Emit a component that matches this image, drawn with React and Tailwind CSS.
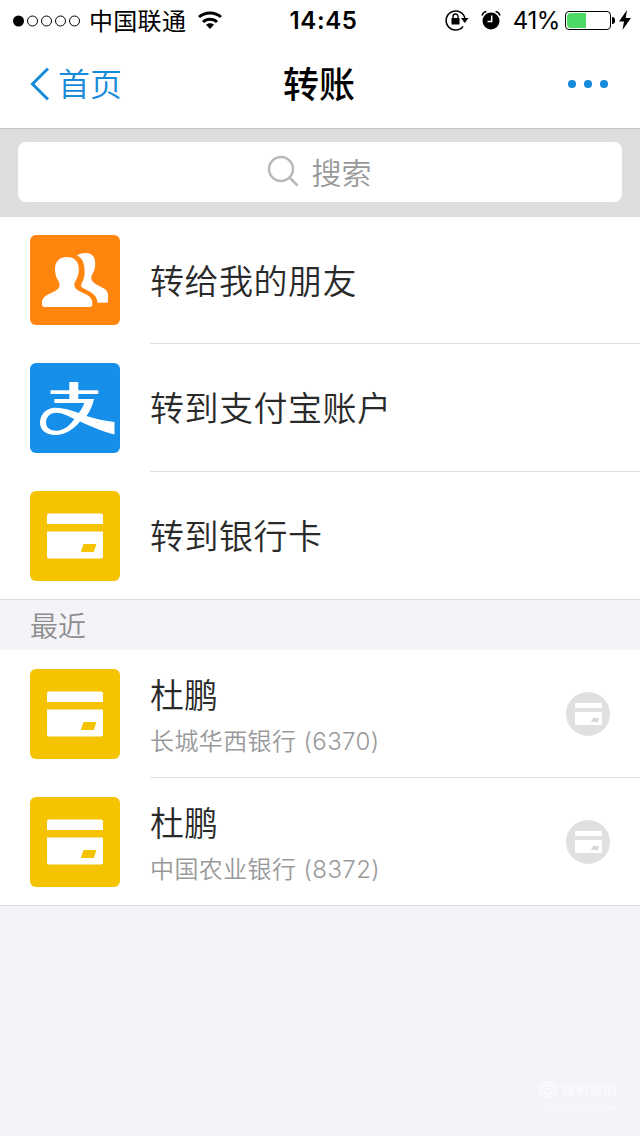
const actions = [
  { id: "friend", label: "转给我的朋友", Icon: FriendsIcon },
  { id: "alipay", label: "转到支付宝账户", Icon: AlipayIcon },
  { id: "card", label: "转到银行卡", Icon: CardIcon },
];

const recents = [
  { id: "6370", name: "杜鹏", bank: "长城华西银行 (6370)" },
  { id: "8372", name: "杜鹏", bank: "中国农业银行 (8372)" },
];

function FriendsIcon() {
  return (
    <svg viewBox="0 0 90 90" className="h-[90px] w-[90px] shrink-0 rounded-md bg-[#ff850f]" fill="#fff">
      <path d="M47 20.500C49.500 18.700 52.500 18 56 18c6 0 9.200 4 9.200 10.500 0 5-1 7.500-2.500 10-1.500 2.500-2 5-.7 7 1.200 2 4 4 7.200 5.600 5.500 2.700 8.800 4.500 8.800 9.200V66c0 1.200-.8 1.800-1.800 1.800H67.500C67 61.500 64 59 59 56.200c-5-2.700-8-3.900-8-5.700 0-2 3.200-5 3.600-12C55 30 53 23 47 20.500z" />
      <path d="M37 22c7.500 0 11.800 4.600 11.800 12 0 5-1 8.500-3.300 12-1.500 2.300-1.500 5.500 0 7.200 2 2.300 5 3.600 8.700 5.200 5 2.200 8.100 4.700 8.100 9.200v2.200c0 1.300-1 2.200-2.300 2.200H14.300c-1.300 0-2.300-.9-2.300-2.200v-2.200c0-4.500 3.100-7 8.100-9.200 3.700-1.600 6.700-2.900 8.400-5.200 1.400-1.800 1.400-4.900-.1-7.200C26.100 42.500 25 39 25 34c0-7.400 4.500-12 12-12z" />
    </svg>
  );
}

function AlipayIcon() {
  return (
    <svg viewBox="0 0 90 90" className="h-[90px] w-[90px] shrink-0 rounded-md bg-[#168feb]" fill="#fff">
      <path d="M39.300 19h9v8.300h20V31h-20v5h15.500v.8c-1.300 6-3.800 11.200-7.300 16.200C65.500 56 75 58 84.500 59v12.500C72.500 68.500 61 63.500 50 58.500 43.500 66.500 35 72 25.500 72 15.700 72 10 67 10 59.500c0-8.300 6.500-14.800 15.500-14.800 7.500 0 15.500 2.500 23.200 5.300 2.700-3.200 4.600-6.500 5.600-10h-30v-4h15v-5H20.500v-3.700h18.800zM44.300 56c-6-3-12-6.300-18-6.300-6 0-10.300 4-10.300 9.800 0 5.200 4.200 8.200 10.500 8.200 7 0 13-4.700 17.800-11.700z" fillRule="evenodd" />
    </svg>
  );
}

function CardIcon() {
  return (
    <svg viewBox="0 0 90 90" className="h-[90px] w-[90px] shrink-0 rounded-md bg-[#f5c300]">
      <path d="M19 22.500h52a2 2 0 0 1 2 2V33H17v-8.500a2 2 0 0 1 2-2z" fill="#fff" />
      <path d="M17 40.500h56v25a2 2 0 0 1-2 2H19a2 2 0 0 1-2-2z" fill="#fff" />
      <path d="M53.500 53h13l-2.700 8H50.800z" fill="#f5c300" />
    </svg>
  );
}

function CardBadge() {
  return (
    <svg viewBox="0 0 44 44" className="h-11 w-11 shrink-0">
      <circle cx="22" cy="22" r="22" fill="#e0e0e0" />
      <path d="M10 11h25a1 1 0 0 1 1 1v4H9v-4a1 1 0 0 1 1-1zM9 20h27v12a1 1 0 0 1-1 1H10a1 1 0 0 1-1-1z" fill="#fff" />
      <path d="M27 26h6l-1 4h-7z" fill="#d8d8d8" />
    </svg>
  );
}

function StatusBar() {
  return (
    <div className="grid h-10 grid-cols-[1fr_auto_1fr] items-center pt-px text-2xl leading-none text-black">
      <div className="flex items-center pl-3">
        <svg viewBox="0 0 70 14" className="h-3.5 w-[70px]">
          <circle cx="6.500" cy="7" r="5.500" />
          {[20.5, 34.5, 48.5, 62.5].map((x) => (
            <circle key={x} cx={x} cy="7" r="5" fill="none" stroke="#000" strokeWidth="1" />
          ))}
        </svg>
        <span className="ml-[7px] pt-0.5 tracking-[0.3px]">中国联通</span>
        <svg viewBox="0 0 24 18" className="mb-px ml-3 h-[18px] w-6" fill="none" stroke="#000" strokeWidth="3">
          <path d="M1 6c6.200-5.500 15.800-5.500 22 0M5 11c4-3.700 10-3.700 14 0" />
          <path d="M12 18l-4-4.200c2.400-2 5.600-2 8 0z" fill="#000" stroke="none" />
        </svg>
      </div>
      <div className="pt-px pl-[7px] font-semibold tracking-[0.6px]">14:45</div>
      <div className="flex items-center justify-end pr-[9px]">
        <svg viewBox="0 0 24 22" className="mb-0.5 h-[22px] w-6">
          <path d="M18 17.500A9.500 9.500 0 1 1 20 10" fill="none" stroke="#000" strokeWidth="1.500" />
          <path d="M16 9h7.500l-3.700 5z" />
          <rect x="6.500" y="9" width="8" height="6.500" rx=".5" />
          <path d="M8 9.500V7.500a2.500 2.500 0 0 1 5 0v2" fill="none" stroke="#000" strokeWidth="1.400" />
        </svg>
        <svg viewBox="0 0 20 20" className="mb-0.5 ml-3 h-5 w-5">
          <circle cx="10" cy="11" r="8.500" />
          <path d="M1 5.500Q2 2 5.500 1.500M19 5.500Q18 2 14.500 1.500" fill="none" stroke="#000" strokeWidth="1.500" />
          <path d="M10.700 5.500v6H6.500" fill="none" stroke="#fff" strokeWidth="1.500" />
        </svg>
        <span className="ml-3 pt-px tracking-[-0.4px]">41%</span>
        <div className="ml-[5px] flex h-[19px] w-[46px] rounded border border-black p-px">
          <div className="w-[19px] rounded-l-sm bg-[#4cd964]" />
        </div>
        <div className="ml-px h-[7px] w-[3px] rounded-r-full bg-black" />
        <svg viewBox="0 0 12 20" className="mb-0.5 ml-1 h-5 w-3">
          <path d="M8 0L0 11.500h5L3.500 20 12 8H6.700z" />
        </svg>
      </div>
    </div>
  );
}

function NavBar() {
  return (
    <header className="grid h-[88px] grid-cols-3 items-center px-[30px]">
      <button className="flex items-center text-[32px] font-[350] leading-none text-[#168adb]">
        <svg viewBox="0 0 20 34" className="mr-2 h-[34px] w-5" fill="none" stroke="#168adb" strokeWidth="3">
          <path d="M18 1.500L2.500 17 18 32.500" />
        </svg>
        <span className="pt-px">首页</span>
      </button>
      <h1 className="pt-px pr-0.5 text-center text-4xl font-medium leading-none text-black">转账</h1>
      <div className="flex justify-end gap-2 pr-0.5">
        <span className="h-2 w-2 rounded-full bg-[#168adb]" />
        <span className="h-2 w-2 rounded-full bg-[#168adb]" />
        <span className="h-2 w-2 rounded-full bg-[#168adb]" />
      </div>
    </header>
  );
}

function SearchBar() {
  return (
    <div className="h-[89px] border-t border-[#c4c4c6] bg-[#dededf] px-[18px] pt-[13px]">
      <div className="flex h-[60px] items-center justify-center rounded-lg bg-white pr-0.5 text-[30px] font-[350] leading-none text-[#999]">
        <svg viewBox="0 0 32 32" className="mr-[13px] mb-0.5 h-8 w-8" fill="none" stroke="#b9b9b9" strokeWidth="2.500">
          <circle cx="14" cy="14" r="12" />
          <path d="M22.500 22.500l8 8" />
        </svg>
        <span className="pt-0.5">搜索</span>
      </div>
    </div>
  );
}

export default function App() {
  return (
    <div className="flex h-[1136px] w-[640px] flex-col overflow-hidden bg-[#f3f3f8] font-[Inter,'Noto_Sans_CJK_SC',sans-serif]">
      <div className="bg-white">
        <StatusBar />
        <NavBar />
      </div>
      <SearchBar />

      <ul className="border-b border-[#dcdce0] bg-white">
        {actions.map(({ id, label, Icon }, i) => (
          <li
            key={id}
            className="flex h-32 items-center gap-[30px] pl-[30px] first:h-[127px] first:*:first:-mt-px last:h-[127px]"
          >
            <Icon />
            <div
              className={`flex h-full flex-1 items-center pt-0.5 text-[34px] font-[350] tracking-[0.5px] text-[#2a2a2a] ${
                i < actions.length - 1 ? "border-b border-[#e0e0e2]" : ""
              }`}
            >
              {label}
            </div>
          </li>
        ))}
      </ul>

      <h2 className="flex h-[50px] items-center pt-[3px] pl-[30px] text-[28px] font-[350] text-[#8e8e8e]">最近</h2>

      <ul className="border-b border-[#dcdce0] bg-white">
        {recents.map((r, i) => (
          <li key={r.id} className="flex h-32 items-center gap-[30px] pl-[30px] last:h-[127px]">
            <CardIcon />
            <div
              className={`flex h-full flex-1 items-center justify-between pr-[30px] ${
                i < recents.length - 1 ? "border-b border-[#e0e0e2]" : ""
              }`}
            >
              <div className="pt-1.5 font-[350]">
                <p className="text-[34px] leading-[50px] text-[#2a2a2a]">{r.name}</p>
                <p className="text-2xl leading-[42px] tracking-[0.4px] text-[#999]">{r.bank}</p>
              </div>
              <CardBadge />
            </div>
          </li>
        ))}
      </ul>

      <footer className="mt-auto mr-[23px] mb-[22px] flex flex-col items-end text-[#fbfbfd]">
        <div className="flex items-center gap-1 text-sm font-medium leading-5">
          <span className="flex h-[18px] w-[18px] items-center justify-center rounded-full border-2 border-[#fbfbfd] text-sm font-bold leading-none">
            S
          </span>
          搜狗指南
        </div>
        <p className="text-[9px] leading-[14px]">zhinan.sogou.com</p>
      </footer>
    </div>
  );
}
